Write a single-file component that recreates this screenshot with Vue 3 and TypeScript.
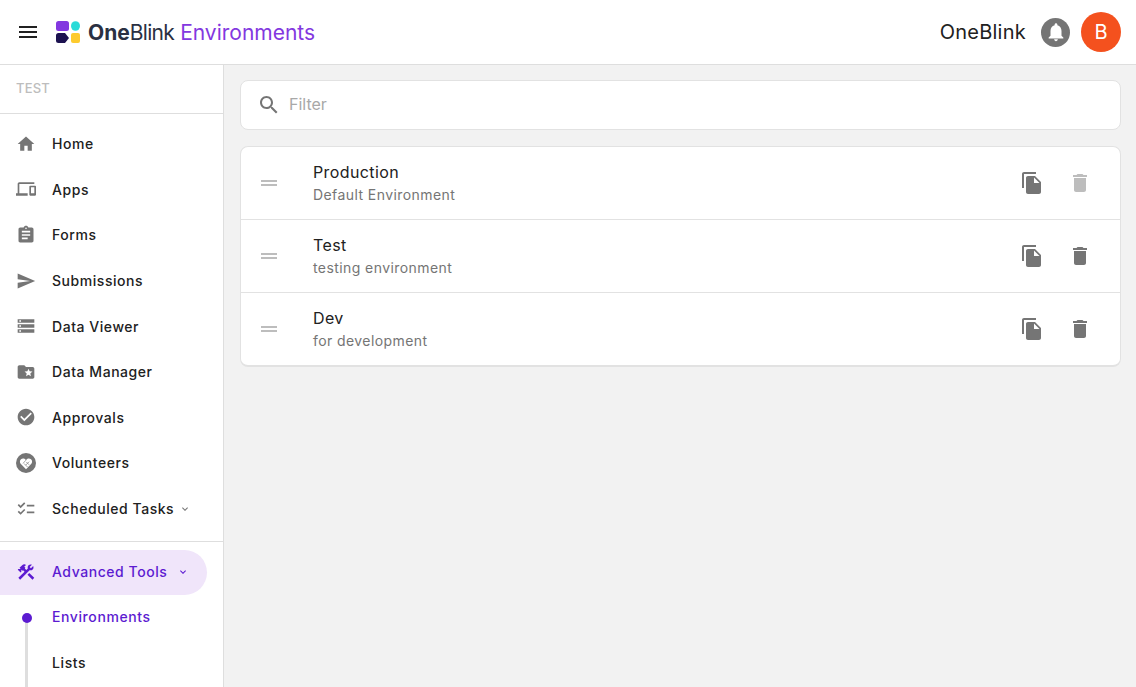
<script setup lang="ts">
interface NavItem {
  label: string
  icon: string
  chevron?: boolean
}

interface EnvRow {
  name: string
  description: string
  locked?: boolean
}

const navItems: NavItem[] = [
  { label: 'Home', icon: 'M10 20v-6h4v6h5v-8h3L12 3 2 12h3v8z' },
  { label: 'Apps', icon: 'M4 6h18V4H4c-1.1 0-2 .9-2 2v11H0v3h14v-3H4V6zm19 2h-6c-.55 0-1 .45-1 1v10c0 .55.45 1 1 1h6c.55 0 1-.45 1-1V9c0-.55-.45-1-1-1zm-1 9h-4v-7h4v7z' },
  { label: 'Forms', icon: 'M19 3h-4.18C14.4 1.84 13.3 1 12 1c-1.3 0-2.4.84-2.82 2H5c-1.1 0-2 .9-2 2v14c0 1.1.9 2 2 2h14c1.1 0 2-.9 2-2V5c0-1.1-.9-2-2-2zm-7 0c.55 0 1 .45 1 1s-.45 1-1 1-1-.45-1-1 .45-1 1-1zm2 14H7v-2h7v2zm3-4H7v-2h10v2zm0-4H7V7h10v2z' },
  { label: 'Submissions', icon: 'M2.01 21L23 12 2.01 3 2 10l15 2-15 2z' },
  { label: 'Data Viewer', icon: 'M2 20h20v-4H2v4zm2-3h2v2H4v-2zM2 4v4h20V4H2zm4 3H4V5h2v2zm-4 7h20v-4H2v4zm2-3h2v2H4v-2z' },
  { label: 'Data Manager', icon: 'M20 6h-8l-2-2H4c-1.1 0-1.99.9-1.99 2L2 18c0 1.1.9 2 2 2h16c1.1 0 2-.9 2-2V8c0-1.1-.9-2-2-2zm-2.06 11L15 15.28 12.06 17l.78-3.33-2.59-2.24 3.41-.29L15 8l1.34 3.14 3.41.29-2.59 2.24.78 3.33z' },
  { label: 'Approvals', icon: 'M12 2C6.48 2 2 6.48 2 12s4.48 10 10 10 10-4.48 10-10S17.52 2 12 2zm-2 15l-5-5 1.41-1.41L10 14.17l7.59-7.59L19 8l-9 9z' },
  { label: 'Volunteers', icon: '' },
  { label: 'Scheduled Tasks', icon: 'M22 7h-9v2h9V7zm0 8h-9v2h9v-2zM5.540 11L2 7.460l1.410-1.410 2.120 2.120 4.240-4.240 1.410 1.410L5.540 11zm0 8L2 15.460l1.410-1.410 2.120 2.120 4.240-4.240 1.410 1.410L5.540 19z', chevron: true },
]

const envRows: EnvRow[] = [
  { name: 'Production', description: 'Default Environment', locked: true },
  { name: 'Test', description: 'testing environment' },
  { name: 'Dev', description: 'for development' },
]

const chevronPath = 'M7.41 8.59L12 13.17l4.59-4.58L18 10l-6 6-6-6z'
</script>

<template>
  <div class="app">
    <header class="topbar">
      <svg class="menu-icon" viewBox="0 0 24 24"><path d="M3 18h18v-2H3v2zm0-5h18v-2H3v2zm0-7v2h18V6H3z" /></svg>
      <svg class="logo" viewBox="0 0 24 22">
        <rect x="0" y="0" width="13" height="10" rx="2.500" fill="#8338e0" />
        <ellipse cx="19.500" cy="5" rx="4.500" ry="4.800" fill="#2adbd8" />
        <path d="M2.500 12H9l4 5-4 5H2.500A2.500 2.500 0 0 1 0 19.500v-5A2.500 2.500 0 0 1 2.500 12z" fill="#1c1250" />
        <rect x="15" y="12" width="9" height="10" rx="2" fill="#fdcb2e" />
      </svg>
      <div class="brand">
        <span class="brand-one">One</span><span class="brand-blink">Blink</span>
        <span class="brand-env">Environments</span>
      </div>
      <div class="topbar-right">
        <span class="tenant">OneBlink</span>
        <span class="bell">
          <svg viewBox="0 0 24 24"><path d="M12 22c1.100 0 2-.9 2-2h-4c0 1.100.89 2 2 2zm6-6v-5c0-3.070-1.640-5.640-4.500-6.320V4c0-.83-.67-1.500-1.500-1.500s-1.500.67-1.500 1.500v.68C7.630 5.360 6 7.920 6 11v5l-2 2v1h16v-1l-2-2z" /></svg>
        </span>
        <span class="avatar">B</span>
      </div>
    </header>

    <div class="body">
      <aside class="sidebar">
        <div class="env-label">TEST</div>
        <nav class="nav-main">
          <a v-for="item in navItems" :key="item.label" class="nav-item">
            <svg v-if="item.icon" class="nav-icon" viewBox="0 0 24 24"><path :d="item.icon" /></svg>
            <svg v-else class="nav-icon" viewBox="0 0 24 24">
              <circle cx="12" cy="12" r="12" />
              <path class="heart" d="M12 19.500l-6.100-6.200C4.200 11.500 4.300 8.800 6 7.400c1.800-1.400 4.300-1 5.600.7l.4.5.4-.5c1.300-1.700 3.800-2.100 5.600-.7 1.700 1.400 1.800 4.100.1 5.900L12 19.500z" />
              <path class="heart-lines" d="M12 8.600l-3.600 3.800M11.600 14.600l4.200-4.200M9.600 12.600l4.200 4.200M12.400 10.800l3.400 3.400" />
            </svg>
            <span>{{ item.label }}</span>
            <svg v-if="item.chevron" class="chevron" viewBox="0 0 24 24"><path :d="chevronPath" /></svg>
          </a>
        </nav>
        <div class="nav-advanced">
          <a class="nav-item nav-item--active">
            <svg class="nav-icon" viewBox="0 0 24 24">
              <path d="M13.783 15.172l2.121-2.121 5.996 5.996-2.121 2.121zM17.500 10c1.930 0 3.500-1.570 3.500-3.500 0-.58-.16-1.120-.41-1.600l-2.700 2.700-1.490-1.490 2.700-2.700c-.48-.25-1.020-.41-1.600-.41C15.570 3 14 4.570 14 6.500c0 .41.08.8.21 1.160l-1.850 1.850-1.780-1.780.71-.71-1.410-1.410L12 3.490c-1.170-1.170-3.070-1.170-4.240 0L4.220 7.030l1.410 1.410H2.810l-.71.71 3.540 3.540.71-.71V9.150l1.410 1.410.71-.71 1.780 1.780-7.410 7.410 2.120 2.120L16.340 9.790c.36.13.75.21 1.160.21z" />
            </svg>
            <span>Advanced Tools</span>
            <svg class="chevron" viewBox="0 0 24 24"><path :d="chevronPath" /></svg>
          </a>
          <div class="subnav">
            <a class="sub-item sub-item--active">Environments</a>
            <a class="sub-item">Lists</a>
          </div>
        </div>
      </aside>

      <main class="content">
        <div class="filter">
          <svg class="search-icon" viewBox="0 0 24 24"><path d="M15.500 14h-.79l-.28-.27C15.410 12.590 16 11.110 16 9.500 16 5.910 13.090 3 9.500 3S3 5.910 3 9.500 5.910 16 9.500 16c1.610 0 3.090-.59 4.230-1.570l.27.28v.79l5 4.990L20.490 19l-4.990-5zm-6 0C7.010 14 5 11.990 5 9.500S7.010 5 9.500 5 14 7.010 14 9.500 11.990 14 9.500 14z" /></svg>
          <span class="filter-text">Filter</span>
        </div>

        <div class="list">
          <div v-for="row in envRows" :key="row.name" class="row">
            <svg class="drag" viewBox="0 0 24 24"><path d="M20 9H4v2h16V9zM4 15h16v-2H4v2z" /></svg>
            <div class="row-text">
              <div class="row-name">{{ row.name }}</div>
              <div class="row-desc">{{ row.description }}</div>
            </div>
            <svg class="action" viewBox="0 0 24 24"><path d="M16 1H4c-1.100 0-2 .9-2 2v14h2V3h12V1zm-1 4l6 6v10c0 1.100-.9 2-2 2H7.990C6.890 23 6 22.100 6 21l.01-14c0-1.100.89-2 1.990-2h7zm-1 7h5.500L14 6.500V12z" /></svg>
            <svg class="action" :class="{ 'action--disabled': row.locked }" viewBox="0 0 24 24"><path d="M6 19c0 1.100.9 2 2 2h8c1.100 0 2-.9 2-2V7H6v12zM19 4h-3.500l-1-1h-5l-1 1H5v2h14V4z" /></svg>
          </div>
        </div>
      </main>
    </div>
  </div>
</template>

<style>
html,
body {
  margin: 0;
  overflow: hidden;
}
</style>

<style scoped>
.app {
  width: 1136px;
  height: 687px;
  display: flex;
  flex-direction: column;
  overflow: hidden;
  background: #f2f2f2;
  color: #212121;
  font-family: Inter, 'Noto Sans', sans-serif;
}

.topbar {
  height: 64px;
  flex: none;
  display: flex;
  align-items: center;
  padding: 0 15px 0 16px;
  background: #fff;
  border-bottom: 1px solid #dedede;
}

.menu-icon {
  width: 24px;
  height: 24px;
  fill: #212121;
}

.logo {
  width: 24px;
  height: 22px;
  margin-left: 16px;
}

.brand {
  display: flex;
  margin-left: 8px;
  font-size: 21px;
}

.brand-one {
  font-weight: 700;
  color: #2a3042;
}

.brand-blink {
  color: #2a3042;
  letter-spacing: -0.7px;
}

.brand-env {
  margin-left: 6px;
  color: #8338e0;
}

.topbar-right {
  margin-left: auto;
  display: flex;
  align-items: center;
}

.tenant {
  font-size: 20px;
  letter-spacing: 0.25px;
}

.bell {
  width: 29px;
  height: 29px;
  margin-left: 15px;
  border-radius: 50%;
  background: #757575;
  display: flex;
  align-items: center;
  justify-content: center;
}

.bell svg {
  width: 22px;
  height: 22px;
  fill: #fff;
}

.avatar {
  width: 40px;
  height: 40px;
  margin-left: 11px;
  border-radius: 50%;
  background: #f4511e;
  color: #fff;
  font-size: 20px;
  display: flex;
  align-items: center;
  justify-content: center;
}

.body {
  flex: 1;
  display: flex;
  min-height: 0;
}

.sidebar {
  width: 223px;
  flex: none;
  background: #fff;
  border-right: 1px solid #dedede;
  overflow: hidden;
}

.env-label {
  height: 49px;
  box-sizing: border-box;
  padding: 15px 16px 0;
  font-size: 13px;
  letter-spacing: 0.2px;
  font-weight: 500;
  color: #bdbdbd;
  border-bottom: 1px solid #dedede;
}

.nav-main {
  padding: 7px 0 10px;
  border-bottom: 1px solid #dedede;
}

.nav-item {
  height: 45.6px;
  display: flex;
  align-items: center;
  padding-left: 16px;
  font-size: 14px;
  font-weight: 500;
  letter-spacing: 0.55px;
}

.nav-icon {
  width: 20px;
  height: 20px;
  margin-right: 16px;
  fill: #757575;
}

.heart {
  fill: #fff;
}

.heart-lines {
  fill: none;
  stroke: #757575;
  stroke-width: 0.8;
}

.chevron {
  width: 12px;
  height: 12px;
  margin-left: 5px;
  fill: #757575;
}

.nav-advanced {
  padding-top: 8px;
}

.nav-item--active {
  width: 207px;
  height: 45px;
  padding-bottom: 2px;
  box-sizing: border-box;
  border-radius: 0 23px 23px 0;
  background: #f0e5fa;
  color: #5c1bd1;
}

.nav-item--active .nav-icon,
.nav-item--active .chevron {
  fill: #5c1bd1;
}

.nav-item--active .chevron {
  margin-left: 10px;
}

.subnav {
  position: relative;
  padding-left: 52px;
}

.subnav::before {
  content: '';
  position: absolute;
  left: 25px;
  top: 22px;
  bottom: 0;
  width: 3px;
  background: #dedede;
}

.sub-item {
  position: relative;
  top: -1.5px;
  height: 45.6px;
  display: flex;
  align-items: center;
  font-size: 14px;
  font-weight: 500;
  letter-spacing: 0.6px;
}

.sub-item--active {
  color: #5c1bd1;
}

.sub-item--active::before {
  content: '';
  position: absolute;
  left: -30px;
  top: 19.5px;
  width: 10px;
  height: 10px;
  border-radius: 50%;
  background: #5c1bd1;
}

.content {
  flex: 1;
  min-width: 0;
  padding: 15px 15px 0 16px;
}

.filter {
  height: 48px;
  display: flex;
  align-items: center;
  padding-left: 16px;
  background: #fff;
  border: 1px solid #e2e2e2;
  border-radius: 8px;
}

.search-icon {
  width: 24px;
  height: 24px;
  fill: #757575;
}

.filter-text {
  margin-left: 8px;
  margin-top: -2px;
  font-size: 16px;
  color: #a8a8a8;
}

.list {
  margin-top: 16px;
  background: #fff;
  border: 1px solid #e2e2e2;
  border-bottom-width: 2px;
  border-radius: 8px;
}

.row {
  height: 72px;
  display: flex;
  align-items: center;
  padding: 0 28px 0 16px;
  border-bottom: 1px solid #e2e2e2;
}

.row:last-child {
  border-bottom: none;
}

.drag {
  width: 24px;
  height: 24px;
  fill: #bdbdbd;
}

.row-text {
  flex: 1;
  margin-left: 32px;
}

.row-name {
  margin-top: -1px;
  font-size: 16px;
  line-height: 24px;
  letter-spacing: 0.4px;
}

.row-desc {
  font-size: 14px;
  line-height: 21px;
  letter-spacing: 0.42px;
  color: #757575;
}

.action {
  width: 24px;
  height: 24px;
  margin-left: 24px;
  fill: #757575;
}

.action--disabled {
  fill: #bdbdbd;
}
</style>
